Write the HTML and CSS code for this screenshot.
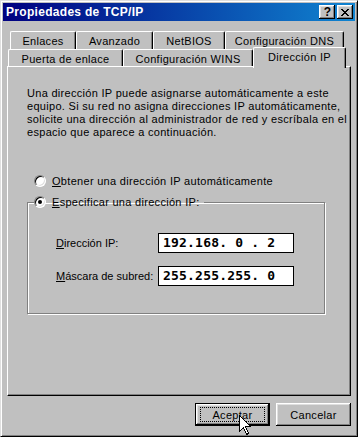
FILE: index.html
```html
<!DOCTYPE html>
<html>
<head>
    <meta name="viewport" content="width=device-width, initial-scale=1">
    <link rel="stylesheet" href="styles.css">
</head>
<body>

<div class="window">
    <div class="titlebar">
        <span class="title">Propiedades de TCP/IP</span>
        <div class="title-buttons">
            <div class="tbtn help">?</div>
            <div class="tbtn close">
                <svg width="8" height="7" viewBox="0 0 8 7" shape-rendering="crispEdges">
                    <path d="M0 0h2v1h-2zM6 0h2v1h-2zM1 1h2v1h-2zM5 1h2v1h-2zM2 2h4v1h-4zM3 3h2v1h-2zM2 4h4v1h-4zM1 5h2v1h-2zM5 5h2v1h-2zM0 6h2v1h-2zM6 6h2v1h-2z" fill="#000"/>
                </svg>
            </div>
        </div>
    </div>

    <div class="content">
        <div class="tabs">
            <div class="tabrow back">
                <div class="tab t-enlaces">Enlaces</div>
                <div class="tab t-avanzado">Avanzado</div>
                <div class="tab t-netbios">NetBIOS</div>
                <div class="tab t-dns">Configuración DNS</div>
            </div>
            <div class="tabrow front">
                <div class="tab t-puerta">Puerta de enlace</div>
                <div class="tab t-wins">Configuración WINS</div>
                <div class="tab t-ip active">Dirección IP</div>
            </div>
        </div>

        <div class="panel">
            <p class="intro">Una dirección IP puede asignarse automáticamente a este<br>
                equipo. Si su red no asigna direcciones IP automáticamente,<br>
                solicite una dirección al administrador de red y escríbala en el<br>
                espacio que aparece a continuación.</p>

            <div class="radio-row">
                <span class="radio"></span>
                <span><u>O</u>btener una dirección IP automáticamente</span>
            </div>

            <fieldset class="group">
                <legend class="radio-row">
                    <span class="radio checked"></span>
                    <span><u>E</u>specificar una dirección IP:</span>
                </legend>
                <div class="field-row">
                    <span class="field-label"><u>D</u>irección IP:</span>
                    <div class="ipbox">192.168. 0 . 2</div>
                </div>
                <div class="field-row">
                    <span class="field-label"><u>M</u>áscara de subred:</span>
                    <div class="ipbox">255.255.255. 0</div>
                </div>
            </fieldset>
        </div>

        <div class="actions">
            <div class="btn default"><span class="focus">Aceptar</span></div>
            <div class="btn">Cancelar</div>
        </div>
    </div>

    <!-- mouse pointer over the OK button -->
    <svg class="cursor" width="12" height="20" viewBox="0 0 12 20" shape-rendering="crispEdges">
        <path d="M0.5 0.5 V16.5 L4.5 12.5 L7.5 19.5 L9.5 18.5 L6.5 11.5 H11.5 Z" fill="#fff" stroke="#000" stroke-width="1"/>
    </svg>
</div>

</body>
</html>
```

FILE: styles.css
```css
* {box-sizing: border-box}
body {
    margin: 0;
    background-color: #c0c0c0;
    font-family: "Liberation Sans", Arial, sans-serif;
    font-size: 11px;
    letter-spacing: 0.3px;
    color: #000;
}

/* Outer dialog frame */
.window {
    position: relative;
    width: 358px;
    height: 437px;
    padding: 1px;
    background-color: #c0c0c0;
    border: 1px solid;
    border-color: #dfdfdf #000 #000 #dfdfdf;
    box-shadow: inset 1px 1px #fff, inset -1px -1px #808080;
}

/* Title bar */
.titlebar {
    display: flex;
    align-items: center;
    height: 18px;
    margin: 1px;
    padding: 0 2px 0 3px;
    background: linear-gradient(to right, #000080, #1084d0);
}
.title {
    flex: 1;
    color: #fff;
    font-weight: bold;
    font-size: 12px;
    letter-spacing: 0.3px;
}
.title-buttons {
    display: flex;
    gap: 2px;
}
.tbtn {
    display: flex;
    align-items: center;
    justify-content: center;
    width: 16px;
    height: 14px;
    background-color: #c0c0c0;
    box-shadow: inset -1px -1px #000, inset 1px 1px #fff, inset -2px -2px #808080, inset 2px 2px #dfdfdf;
}
.tbtn.help {
    font-weight: bold;
    font-size: 12px;
    line-height: 14px;
    padding-left: 1px;
}
.tbtn.close svg {
    margin-left: -1px;
}

/* Dialog body */
.content {
    padding: 0 5px;
}

/* Tabs */
.tabs {
    margin-top: 10px;
}
.tabrow {
    display: flex;
    height: 18px;
}
.tabrow.back {
    margin-left: 3px;
}
.tabrow.front {
    margin-left: 1px;
    height: 17px;
    position: relative;
    z-index: 1;
}
.tab {
    display: flex;
    align-items: center;
    justify-content: center;
    height: 18px;
    white-space: nowrap;
    background-color: #c0c0c0;
    border-left: 1px solid #fff;
    border-top: 1px solid #fff;
    border-right: 1px solid #000;
    border-top-left-radius: 2px;
    border-top-right-radius: 2px;
    box-shadow: inset -1px 0 #808080;
    padding-top: 1px;
}
.tabrow.front .tab {
    height: 17px;
}
.tab.active {
    height: 21px;
    margin-top: -2px;
    padding-bottom: 4px;
    position: relative;
}
.t-enlaces {width: 66px}
.t-avanzado {width: 77px}
.t-netbios {width: 72px}
.t-dns {width: 119px}
.t-puerta {width: 115px}
.t-wins {width: 130px}
.tabrow.front .t-ip {width: 93px; height: 21px}

/* Tab page */
.panel {
    height: 330px;
    padding: 20px 19px 0;
    border: 1px solid;
    border-color: #fff #000 #000 #fff;
    box-shadow: inset -1px -1px #808080;
}
.intro {
    margin: 0;
    line-height: 13px;
    white-space: nowrap;
}

.radio-row {
    display: flex;
    align-items: center;
    gap: 6px;
    height: 16px;
    margin-top: 34px;
    margin-left: 7px;
    white-space: nowrap;
}
.radio {
    position: relative;
    width: 12px;
    height: 12px;
    flex-shrink: 0;
    border-radius: 50%;
    background-color: #fff;
    border: 1px solid;
    border-color: #808080 #fff #fff #808080;
    box-shadow: inset 1px 1px #000, inset -1px -1px #dfdfdf;
}
.radio.checked::after {
    content: "";
    position: absolute;
    left: 3px;
    top: 3px;
    width: 4px;
    height: 4px;
    border-radius: 50%;
    background-color: #000;
}

/* Group box */
.group {
    width: 298px;
    margin: 5px 0 0 0;
    padding: 0 6px 27px;
    border: 1px solid #808080;
    box-shadow: inset 1px 1px #fff, 1px 1px #fff;
}
.group legend.radio-row {
    margin: 0;
    padding: 0 4px 0 0;
}
.field-row {
    display: flex;
    align-items: center;
    margin-left: 22px;
    margin-top: 13px;
}
.field-row:first-of-type {
    margin-top: 23px;
}
.field-label {
    width: 102px;
    flex-shrink: 0;
    white-space: nowrap;
    letter-spacing: 0;
}
.ipbox {
    width: 136px;
    height: 20px;
    flex-shrink: 0;
    padding-left: 4px;
    background-color: #fff;
    border: 1px solid #000;
    font-family: "DejaVu Sans Mono", "Liberation Mono", monospace;
    font-weight: bold;
    font-size: 13px;
    letter-spacing: 0.2px;
    line-height: 18px;
    white-space: pre;
}

/* Bottom buttons */
.actions {
    display: flex;
    justify-content: flex-end;
    gap: 6px;
    margin-top: 7px;
}
.btn {
    display: flex;
    align-items: center;
    justify-content: center;
    width: 75px;
    height: 23px;
    background-color: #c0c0c0;
    box-shadow: inset -1px -1px #000, inset 1px 1px #fff, inset -2px -2px #808080, inset 2px 2px #dfdfdf;
}
.btn.default {
    border: 1px solid #000;
    box-shadow: inset -1px -1px #000, inset 1px 1px #fff, inset -2px -2px #808080, inset 2px 2px #dfdfdf;
}
.btn .focus {
    display: flex;
    align-items: center;
    justify-content: center;
    width: 65px;
    height: 15px;
    border: 1px dotted #000;
}

.cursor {
    position: absolute;
    left: 238px;
    top: 414px;
}
```
